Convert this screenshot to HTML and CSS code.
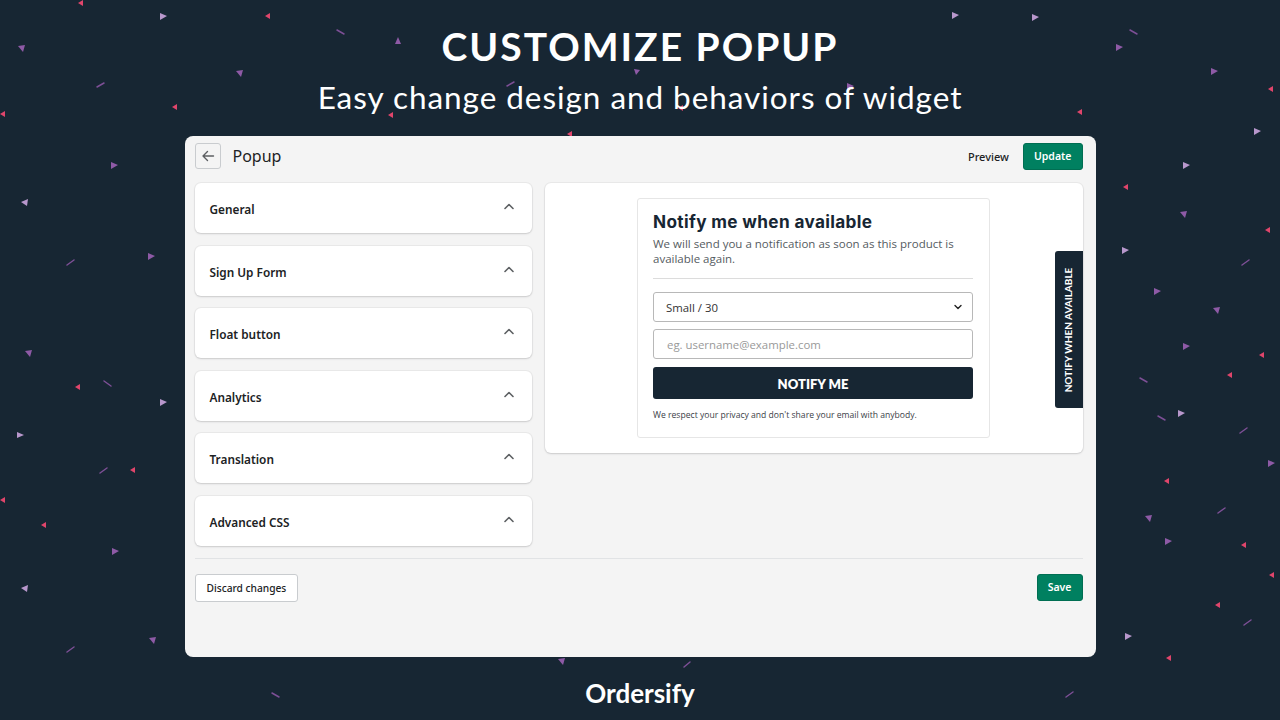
FILE: index.html
```html
<!DOCTYPE html>
<html lang="en">
<head>
<meta charset="utf-8">
<title>Customize Popup</title>
<link rel="stylesheet" href="styles.css">
</head>
<body>
<svg class="confetti" width="1280" height="720" viewBox="0 0 1280 720" aria-hidden="true">
  <g class="pink">
    <polygon points="78,3 83,0 83,6"/><polygon points="265,16 270,13 270,19"/><polygon points="0,114 5,111 5,117"/>
    <polygon points="172,107 177,104 177,110"/><polygon points="1268,89 1273,86 1273,92"/><polygon points="1123,187 1128,184 1128,190"/>
    <polygon points="1265,230 1270,227 1270,233"/><polygon points="1259,355 1264,352 1264,358"/><polygon points="1227,375 1232,372 1232,378"/>
    <polygon points="1164,481 1169,478 1169,484"/><polygon points="1241,545 1246,542 1246,548"/><polygon points="1269,575 1274,572 1274,578"/>
    <polygon points="1215,605 1220,602 1220,608"/><polygon points="1166,658 1171,655 1171,661"/><polygon points="75,387 80,384 80,390"/>
    <polygon points="0,500 5,497 5,503"/><polygon points="41,525 46,522 46,528"/><polygon points="130,470 135,467 135,473"/>
    <polygon points="567,134 572,131 572,137"/><polygon points="388,115 393,112 393,118"/><polygon points="678,108 683,105 683,111"/>
    <polygon points="1077,112 1082,109 1082,115"/>
  </g>
  <g class="purple">
    <polygon points="18,46 25,45 23,52"/><polygon points="236,71 243,70 241,77"/><polygon points="111,162 118,165 111,169"/>
    <polygon points="1180,212 1187,211 1185,218"/><polygon points="1154,288 1161,291 1154,295"/><polygon points="1213,308 1220,307 1218,314"/>
    <polygon points="1183,343 1190,346 1183,350"/><polygon points="1268,460 1275,463 1268,467"/><polygon points="1145,516 1152,515 1150,522"/>
    <polygon points="1165,538 1172,541 1165,545"/><polygon points="148,253 155,256 148,260"/><polygon points="25,351 32,350 30,357"/>
    <polygon points="112,548 119,551 112,555"/><polygon points="149,638 156,637 154,644"/><polygon points="558,659 565,658 563,665"/>
    <polygon points="398,37 401,44 395,44"/><polygon points="1211,68 1218,71 1211,75"/><polygon points="1116,44 1123,47 1116,51"/>
    <polygon points="847,83 854,86 847,90"/><polygon points="634,69 640,70 636,75"/>
  </g>
  <g class="lilac">
    <polygon points="160,13 167,16 160,20"/><polygon points="21,202 28,199 27,206"/><polygon points="952,12 959,15 952,19"/>
    <polygon points="1254,128 1261,131 1254,135"/><polygon points="1183,162 1190,165 1183,169"/><polygon points="1122,247 1129,250 1122,254"/>
    <polygon points="1178,410 1185,413 1178,417"/><polygon points="160,399 167,402 160,406"/><polygon points="17,432 24,435 17,438"/>
    <polygon points="21,588 28,585 27,592"/><polygon points="1125,633 1132,636 1125,640"/><polygon points="1032,14 1039,17 1032,21"/>
  </g>
  <g class="line">
    <path d="M97 87 L104 83"/><path d="M337 30 L344 34"/><path d="M1130 30 L1137 34"/><path d="M1242 265 L1249 260"/>
    <path d="M1140 378 L1147 382"/><path d="M1158 416 L1165 420"/><path d="M1240 433 L1247 428"/><path d="M1218 513 L1225 508"/>
    <path d="M1244 625 L1251 620"/><path d="M67 265 L74 260"/><path d="M104 381 L111 386"/><path d="M100 473 L107 468"/>
    <path d="M67 652 L74 647"/><path d="M272 693 L279 697"/><path d="M1066 697 L1073 692"/><path d="M684 667 L690 662"/>
    <path d="M507 86 L514 82"/>
  </g>
</svg>

<main class="page">
  <h1 class="hero-title">CUSTOMIZE POPUP</h1>
  <p class="hero-sub">Easy change design and behaviors of widget</p>

  <section class="app">
    <header class="topbar">
      <div class="topbar-left">
        <button class="back-btn" aria-label="Back">
          <svg width="14" height="14" viewBox="0 0 14 14"><path d="M12.5 7H2 M6.5 2.5 L2 7 L6.5 11.5" fill="none" stroke="#5c5f62" stroke-width="1.4" stroke-linecap="round" stroke-linejoin="round"/></svg>
        </button>
        <h2 class="page-title">Popup</h2>
      </div>
      <div class="topbar-right">
        <button class="plain-btn">Preview</button>
        <button class="primary-btn">Update</button>
      </div>
    </header>

    <div class="content">
      <div class="settings">
        <div class="acc"><span>General</span><svg class="chev" width="12" height="8" viewBox="0 0 12 8"><path d="M2 6.5 L6 2.5 L10 6.5" fill="none" stroke="#5c5f62" stroke-width="1.6" stroke-linecap="round" stroke-linejoin="round"/></svg></div>
        <div class="acc"><span>Sign Up Form</span><svg class="chev" width="12" height="8" viewBox="0 0 12 8"><path d="M2 6.5 L6 2.5 L10 6.5" fill="none" stroke="#5c5f62" stroke-width="1.6" stroke-linecap="round" stroke-linejoin="round"/></svg></div>
        <div class="acc"><span>Float button</span><svg class="chev" width="12" height="8" viewBox="0 0 12 8"><path d="M2 6.5 L6 2.5 L10 6.5" fill="none" stroke="#5c5f62" stroke-width="1.6" stroke-linecap="round" stroke-linejoin="round"/></svg></div>
        <div class="acc"><span>Analytics</span><svg class="chev" width="12" height="8" viewBox="0 0 12 8"><path d="M2 6.5 L6 2.5 L10 6.5" fill="none" stroke="#5c5f62" stroke-width="1.6" stroke-linecap="round" stroke-linejoin="round"/></svg></div>
        <div class="acc"><span>Translation</span><svg class="chev" width="12" height="8" viewBox="0 0 12 8"><path d="M2 6.5 L6 2.5 L10 6.5" fill="none" stroke="#5c5f62" stroke-width="1.6" stroke-linecap="round" stroke-linejoin="round"/></svg></div>
        <div class="acc"><span>Advanced CSS</span><svg class="chev" width="12" height="8" viewBox="0 0 12 8"><path d="M2 6.5 L6 2.5 L10 6.5" fill="none" stroke="#5c5f62" stroke-width="1.6" stroke-linecap="round" stroke-linejoin="round"/></svg></div>
      </div>

      <div class="preview">
        <div class="popup">
          <h3 class="popup-title">Notify me when available</h3>
          <p class="popup-desc">We will send you a notification as soon as this product is available again.</p>
          <hr class="popup-rule">
          <div class="field select">
            <span>Small / 30</span>
            <svg width="10" height="6" viewBox="0 0 10 6"><path d="M2 1.5 L5 4.5 L8 1.5" fill="none" stroke="#222" stroke-width="1.4" stroke-linecap="round" stroke-linejoin="round"/></svg>
          </div>
          <div class="field input"><span>eg. username@example.com</span></div>
          <button class="notify-btn">NOTIFY ME</button>
          <p class="privacy">We respect your privacy and don't share your email with anybody.</p>
        </div>
        <div class="side-tab"><span>NOTIFY WHEN AVAILABLE</span></div>
      </div>
    </div>

    <footer class="footer">
      <button class="secondary-btn">Discard changes</button>
      <button class="primary-btn">Save</button>
    </footer>
  </section>

  <div class="brand">Ordersify</div>
</main>
</body>
</html>
```

FILE: styles.css
```css
* { box-sizing: border-box; }

html, body {
  margin: 0;
  padding: 0;
  width: 1280px;
  height: 720px;
  overflow: hidden;
  background: #172633;
}

.confetti {
  position: absolute;
  left: 0;
  top: 0;
  pointer-events: none;
}
.confetti .pink polygon { fill: #e0456b; }
.confetti .purple polygon { fill: #8e5aa6; }
.confetti .lilac polygon { fill: #b897cc; }
.confetti .line path { stroke: #7d4f96; stroke-width: 1.5; stroke-linecap: round; fill: none; }

.page {
  position: relative;
  display: flex;
  flex-direction: column;
  align-items: center;
  height: 720px;
}

.hero-title {
  margin: 24px 0 0;
  height: 44px;
  line-height: 44px;
  font-family: "Lato", sans-serif;
  font-weight: 700;
  font-size: 39px;
  letter-spacing: 2px;
  color: #ffffff;
}

.hero-sub {
  margin: 9px 0 0;
  height: 40px;
  line-height: 40px;
  font-family: "Lato", sans-serif;
  font-weight: 400;
  font-size: 31.5px;
  letter-spacing: 0.95px;
  color: #ffffff;
}

.app {
  margin-top: 19px;
  width: 911px;
  height: 521px;
  background: #f4f4f4;
  border-radius: 8px;
  padding: 7px 13px 0 10px;
  display: flex;
  flex-direction: column;
  font-family: "Noto Sans", "Open Sans", sans-serif;
  color: #202223;
}

button { font-family: inherit; cursor: pointer; }

.topbar {
  height: 26px;
  display: flex;
  align-items: center;
  justify-content: space-between;
}
.topbar-left, .topbar-right { display: flex; align-items: center; }
.back-btn {
  width: 26px;
  height: 26px;
  padding: 0;
  display: flex;
  align-items: center;
  justify-content: center;
  background: #f4f4f4;
  border: 1px solid #c9cccf;
  border-radius: 3px;
}
.page-title {
  margin: 0 0 0 12px;
  font-size: 16px;
  font-weight: 400;
  color: #202223;
}
.plain-btn {
  background: none;
  border: 0;
  font-size: 11px;
  font-weight: 500;
  color: #202223;
  padding: 0;
  margin-right: 14px;
}
.primary-btn {
  height: 27px;
  padding: 0 10px;
  background: #008060;
  color: #fff;
  border: 1px solid #006e52;
  border-radius: 3px;
  font-size: 10.5px;
  font-weight: 600;
}

.content {
  margin-top: 14px;
  display: flex;
  gap: 13px;
  align-items: flex-start;
}

.settings {
  width: 337px;
  display: flex;
  flex-direction: column;
  gap: 12.5px;
}
.acc {
  height: 50px;
  background: #fff;
  border-radius: 6px;
  box-shadow: 0 0 0 1px rgba(63,63,68,0.05), 0 1px 2px rgba(63,63,68,0.18);
  display: flex;
  align-items: center;
  justify-content: space-between;
  padding: 2px 17px 0 15px;
  font-size: 11.8px;
  font-weight: 600;
}
.acc .chev { margin-top: -6px; }

.preview {
  position: relative;
  flex: 1;
  height: 270px;
  background: #fff;
  border-radius: 6px;
  box-shadow: 0 0 0 1px rgba(63,63,68,0.05), 0 1px 2px rgba(63,63,68,0.18);
  padding-top: 15px;
  display: flex;
  justify-content: center;
}
.popup {
  width: 353px;
  height: 240px;
  border: 1px solid #e6e6e6;
  border-radius: 3px;
  padding: 12px 16px 0 15px;
  font-family: "Open Sans", sans-serif;
  color: #172633;
}
.popup-title {
  margin: 0;
  font-family: "Inter", sans-serif;
  font-size: 17.2px;
  font-weight: 700;
  line-height: 22px;
  letter-spacing: 0.35px;
  color: #172633;
}
.popup-desc {
  margin: 3px 0 0;
  font-size: 11.5px;
  line-height: 15px;
  color: #555b61;
}
.popup-rule {
  margin: 12px 0 13px;
  border: 0;
  border-top: 1.5px solid #dcdcdc;
}
.field {
  height: 30px;
  border: 1px solid #b8b8b8;
  border-radius: 3px;
  display: flex;
  align-items: center;
  justify-content: space-between;
  padding: 0 9px 0 12px;
  font-size: 11.4px;
}
.select { color: #333; }
.input { margin-top: 7px; color: #999; padding-left: 13px; }
.notify-btn {
  margin-top: 8px;
  width: 100%;
  height: 32px;
  padding-top: 2px;
  background: #172633;
  color: #fff;
  border: 0;
  border-radius: 3px;
  font-family: "Lato", sans-serif;
  font-size: 13px;
  font-weight: 800;
}
.privacy {
  margin: 10px 0 0;
  font-size: 8.6px;
  color: #3b4148;
}

.side-tab {
  position: absolute;
  right: 0;
  top: 68px;
  width: 28px;
  height: 157px;
  background: #172633;
  border-radius: 3px 0 0 3px;
  display: flex;
  align-items: center;
  justify-content: center;
}
.side-tab span {
  display: block;
  transform: rotate(-90deg);
  white-space: nowrap;
  color: #fff;
  font-family: "Lato", sans-serif;
  font-weight: 700;
  font-size: 10px;
}

.footer {
  margin-top: 12px;
  border-top: 1px solid #e1e3e5;
  padding-top: 15px;
  display: flex;
  justify-content: space-between;
}
.secondary-btn {
  height: 28px;
  padding: 0 11px;
  background: #fff;
  border: 1px solid #c9cccf;
  border-radius: 3px;
  font-size: 10.2px;
  font-weight: 500;
  color: #202223;
}

.brand {
  margin-top: 21px;
  height: 30px;
  line-height: 30px;
  font-family: "Lato", sans-serif;
  font-weight: 700;
  font-size: 26px;
  color: #fff;
}
```
